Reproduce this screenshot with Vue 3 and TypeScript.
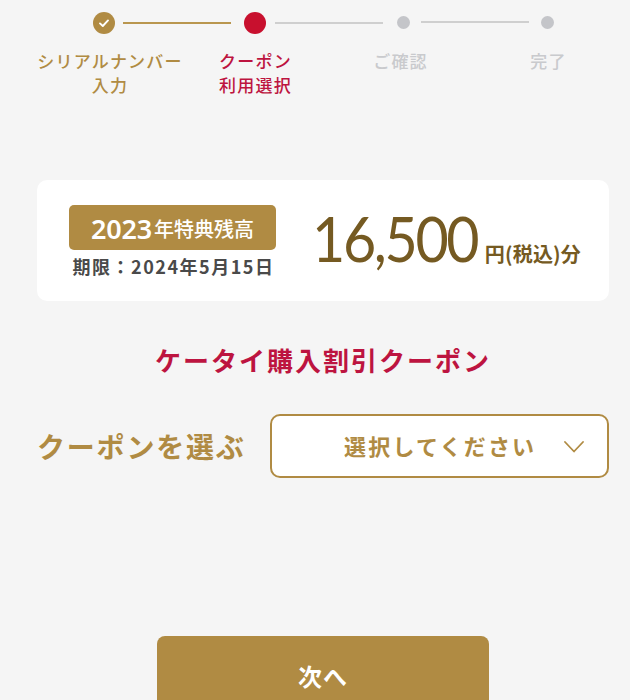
<script setup lang="ts">
const doneColor = '#b08b43'
</script>

<template>
  <main class="page">
    <div class="track">
      <span class="dot done">
        <svg width="12" height="12" viewBox="0 0 12 12" fill="none">
          <path d="M2 6.4 L4.8 9 L10 3.4" stroke="#fff" stroke-width="1.9" stroke-linecap="round" stroke-linejoin="round" />
        </svg>
      </span>
      <span class="line gold"></span>
      <span class="dot current"></span>
      <span class="line grey first-grey"></span>
      <span class="dot todo"></span>
      <span class="line grey second-grey"></span>
      <span class="dot todo"></span>
    </div>

    <div class="labels">
      <div class="label l1">シリアルナンバー<br />入力</div>
      <div class="label l2">クーポン<br />利用選択</div>
      <div class="label l3">ご確認</div>
      <div class="label l4">完了</div>
    </div>

    <section class="card">
      <div class="left">
        <div class="badge"><span class="year">2023</span><span class="year-text">年特典残高</span></div>
        <div class="limit">期限：2024年5月15日</div>
      </div>
      <div class="amount">
        <span class="num">16,500</span><span class="unit">円(税込)分</span>
      </div>
    </section>

    <h1 class="title">ケータイ購入割引クーポン</h1>

    <div class="chooser">
      <div class="choose-label">クーポンを選ぶ</div>
      <div class="select">
        <span class="select-text">選択してください</span>
        <svg class="chev" width="20" height="12" viewBox="0 0 20 12" fill="none">
          <path d="M1 1 L10 10.5 L19 1" :stroke="doneColor" stroke-width="1.8" stroke-linecap="round" stroke-linejoin="round" />
        </svg>
      </div>
    </div>

    <button class="next" type="button">次へ</button>
  </main>
</template>

<style>
html, body { margin: 0; background: #f5f5f5; overflow: hidden; }
</style>

<style scoped>
.page {
  height: 700px;
  overflow: hidden;
  box-sizing: border-box;
  padding: 0 21px 0 37px;
  background: #f5f5f5;
  font-family: "Noto Sans CJK JP", "Noto Sans", sans-serif;
}
.track {
  display: flex;
  align-items: center;
  height: 22px;
  padding: 12px 0 0 56px;
}
.dot { flex: none; border-radius: 50%; display: flex; align-items: center; justify-content: center; }
.done { width: 22px; height: 22px; background: #b08b43; }
.current { width: 22px; height: 22px; background: #c8102e; }
.todo { width: 13px; height: 13px; background: #c4c5c9; margin-top: -2px; }
.line { flex: none; height: 2px; width: 108px; }
.gold { background: #b9964f; margin: 0 13px 0 8px; }
.grey { background: #cfcfcf; }
.first-grey { margin: 0 14px 0 9px; }
.second-grey { margin: -2px 12px 0 11px; }
.labels {
  display: flex;
  margin-top: 15px;
  height: 64px;
}
.label {
  font-size: 17px;
  line-height: 24px;
  letter-spacing: 1.2px;
  font-weight: 500;
  text-align: center;
  white-space: nowrap;
}
.l1 { width: 146px; color: #b08b43; }
.l2 { width: 73px; margin-left: 36px; color: #bd1440; }
.l3 { width: 55px; margin-left: 81px; color: #c9cacd; }
.l4 { width: 37px; margin-left: 102px; color: #c9cacd; }
.card {
  margin-top: 67px;
  height: 121px;
  background: #fff;
  border-radius: 10px;
  display: flex;
  box-sizing: border-box;
  padding: 25px 28px 0 32px;
}
.left { width: 207px; flex: none; }
.badge {
  height: 45px;
  box-sizing: border-box;
  padding-top: 2px;
  background: #b08b43;
  border-radius: 5px;
  color: #fff;
  display: flex;
  align-items: center;
  justify-content: center;
  font-weight: 700;
}
.year { font-family: "Noto Sans", sans-serif; font-size: 27px; font-weight: 600; letter-spacing: -0.2px; }
.year-text { font-size: 20px; margin-left: 2px; font-weight: 500; }
.limit {
  margin-top: 3px;
  padding-left: 2px;
  color: #4a4a4a;
  font-size: 18px;
  line-height: 26px;
  font-weight: 700;
  letter-spacing: 1.5px;
  text-align: center;
  white-space: nowrap;
}
.amount {
  margin-left: 39px;
  margin-top: -1px;
  display: flex;
  align-items: baseline;
  white-space: nowrap;
  color: #755a22;
}
.num {
  display: inline-block;
  font-family: Lato, sans-serif;
  font-size: 61px;
  line-height: 70px;
  letter-spacing: -2.5px;
  margin-left: -3px;
  transform: scaleX(0.94);
  transform-origin: left center;
}
.unit { font-size: 20px; font-weight: 700; margin-left: -3px; letter-spacing: 0.2px; }
.title {
  margin: 41px 0 0;
  text-align: center;
  color: #bd1440;
  font-size: 26px;
  line-height: 36px;
  letter-spacing: 2px;
  font-weight: 700;
}
.chooser {
  margin-top: 36px;
  display: flex;
  align-items: center;
  height: 64px;
}
.choose-label {
  width: 233px;
  flex: none;
  color: #b08b43;
  font-size: 28px;
  font-weight: 700;
  letter-spacing: 1.8px;
  white-space: nowrap;
}
.select {
  flex: 1;
  height: 64px;
  box-sizing: border-box;
  border: 2px solid #b08b43;
  border-radius: 10px;
  background: #fff;
  display: flex;
  align-items: center;
}
.select-text {
  margin: 0 0 3px 72px;
  color: #b08b43;
  font-size: 22px;
  font-weight: 700;
  letter-spacing: 2.2px;
  white-space: nowrap;
}
.chev { margin: 2px 0 0 28px; }
.next {
  display: block;
  margin: 158px 0 0 120px;
  width: 332px;
  height: 78px;
  border: 0;
  border-radius: 8px;
  background: #b08b43;
  color: #fff;
  font-family: inherit;
  font-size: 24px;
  font-weight: 700;
  padding: 0;
  letter-spacing: 1px;
}
</style>
